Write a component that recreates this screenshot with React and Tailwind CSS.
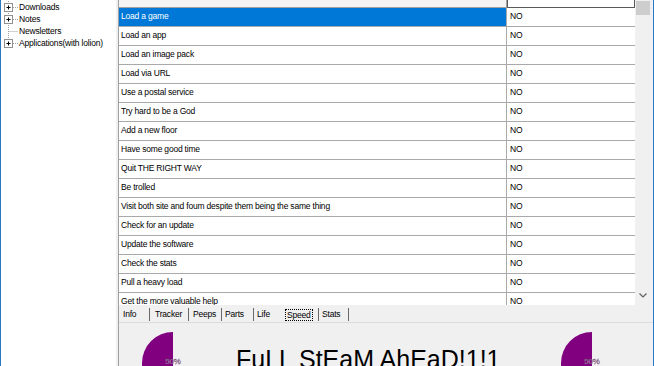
import React from "react";

const rows = [
  "Load a game",
  "Load an app",
  "Load an image pack",
  "Load via URL",
  "Use a postal service",
  "Try hard to be a God",
  "Add a new floor",
  "Have some good time",
  "Quit THE RIGHT WAY",
  "Be trolled",
  "Visit both site and foum despite them being the same thing",
  "Check for an update",
  "Update the software",
  "Check the stats",
  "Pull a heavy load",
  "Get the more valuable help",
];

const treeItems = [
  { label: "Downloads", box: true },
  { label: "Notes", box: true },
  { label: "Newsletters", box: false },
  { label: "Applications(with lolion)", box: true, last: true },
];

const tabs = [
  { label: "Info", w: "w-[31px] pl-[4px] border-r", focus: false },
  { label: "Tracker", w: "w-[39px] pl-[5px] border-r", focus: false },
  { label: "Peeps", w: "w-[33px] pl-[4px] border-r", focus: false },
  { label: "Parts", w: "w-[32px] pl-[3px] border-r", focus: false },
  { label: "Life", w: "w-[29px] pl-[3px]", focus: false },
  { label: "Speed", w: "w-[36px] pl-[2px] border-r", focus: true },
  { label: "Stats", w: "w-[30px] pl-[3px] border-r", focus: false },
];

const TreeGlyph = ({ box, last }) => (
  <svg width="18" height="12" viewBox="0 0 18 12" className="shrink-0">
    <line
      x1="7.5"
      y1="0"
      x2="7.5"
      y2={last ? 6.5 : 12}
      stroke="#a0a0a0"
      strokeDasharray="1 1"
    />
    <line
      x1={box ? 12 : 7.5}
      y1="6.5"
      x2="17"
      y2="6.5"
      stroke="#a0a0a0"
      strokeDasharray="1 1"
    />
    {box && (
      <>
        <rect x="3.5" y="2.5" width="8" height="8" fill="#fff" stroke="#919191" />
        <line x1="5.5" y1="6.5" x2="9.5" y2="6.5" stroke="#000" />
        <line x1="7.5" y1="4.5" x2="7.5" y2="8.5" stroke="#000" />
      </>
    )}
  </svg>
);

const Pie = () => (
  <svg width="64" height="64" viewBox="0 0 64 64" className="shrink-0">
    <path d="M32 1 A31 31 0 0 0 32 63 Z" fill="#800080" />
    <text
      x="32"
      y="33"
      textAnchor="middle"
      fontSize="8"
      fontFamily="Liberation Sans, Arial, sans-serif"
      fill="#e2cce2"
      stroke="#5a2a5a"
      strokeWidth="0.3"
    >
      50%
    </text>
  </svg>
);

const App = () => {
  return (
    <div className="w-[654px] h-[366px] flex overflow-hidden bg-white border-x border-[#2b78c5] font-['Liberation_Sans',Arial,sans-serif] text-[8.5px] tracking-[-0.2px] text-black">
      {/* left tree */}
      <div className="w-[115px] shrink-0 bg-white pt-[1px]">
        {treeItems.map((item) => (
          <div key={item.label} className="flex items-center h-[12px] whitespace-nowrap">
            <TreeGlyph box={item.box} last={item.last} />
            <span className="leading-none">{item.label}</span>
          </div>
        ))}
      </div>

      {/* splitter */}
      <div className="w-[2px] shrink-0 bg-[#f0f0f0]" />

      {/* right pane */}
      <div className="flex-1 flex flex-col border-l border-[#a0a0a0] min-w-0">
        <div className="h-[305px] flex overflow-hidden bg-white">
          <div className="w-[516px] flex flex-col">
            <div className="h-[8px] shrink-0 flex">
              <div className="w-[388px] bg-[#f4f4f4] border-b border-r border-[#a0a0a0]" />
              <div className="flex-1 bg-white border-x border-b border-[#5a5a5a]" />
            </div>
            {rows.map((label, i) => (
              <div key={label} className="h-[19px] shrink-0 flex border-b border-[#a9a9a9]">
                <div
                  className={
                    i === 0
                      ? "w-[388px] flex items-center pl-[2px] pb-[2px] border-r border-[#a9a9a9] bg-[#0078d7] text-white whitespace-nowrap"
                      : "w-[388px] flex items-center pl-[2px] pb-[2px] border-r border-[#a9a9a9] whitespace-nowrap"
                  }
                >
                  {label}
                </div>
                <div className="flex-1 flex items-center pl-[3px] pb-[2px]">NO</div>
              </div>
            ))}
          </div>

          {/* scrollbar */}
          <div className="flex-1 bg-[#f0f0f0] flex flex-col justify-between">
            <div className="mt-[1px] ml-[1px] mr-[3px] h-[14px] bg-[#cdcdcd]" />
            <div className="h-[17px] flex items-center justify-center pb-[2px] pr-[2px]">
              <svg width="8" height="5" viewBox="0 0 8 5">
                <path d="M0.5 0.5 L4 4 L7.5 0.5" fill="none" stroke="#606060" strokeWidth="1.2" />
              </svg>
            </div>
          </div>
        </div>

        {/* tabs */}
        <div className="h-[17px] shrink-0 bg-[#f0f0f0] flex items-start">
          {tabs.map((t) => (
            <div
              key={t.label}
              className={`${t.w} mt-[3px] h-[13px] flex items-center border-[#696969] whitespace-nowrap`}
            >
              {t.focus ? (
                <span className="border border-dotted border-black px-[1px] leading-[10px]">{t.label}</span>
              ) : (
                <span className="leading-none">{t.label}</span>
              )}
            </div>
          ))}
        </div>

        {/* bottom panel */}
        <div className="flex-1 bg-[#f0f0f0] border-t border-[#dcdcdc] flex items-start overflow-hidden">
          <div className="ml-[22px] mt-[8px]">
            <Pie />
          </div>
          <div className="ml-[31px] w-[324px] mt-[24px] text-[25px] leading-none tracking-normal whitespace-nowrap">
            FuLL StEaM AhEaD!1!1
          </div>
          <div className="mt-[8px]">
            <Pie />
          </div>
        </div>
      </div>
    </div>
  );
};

export default App;
